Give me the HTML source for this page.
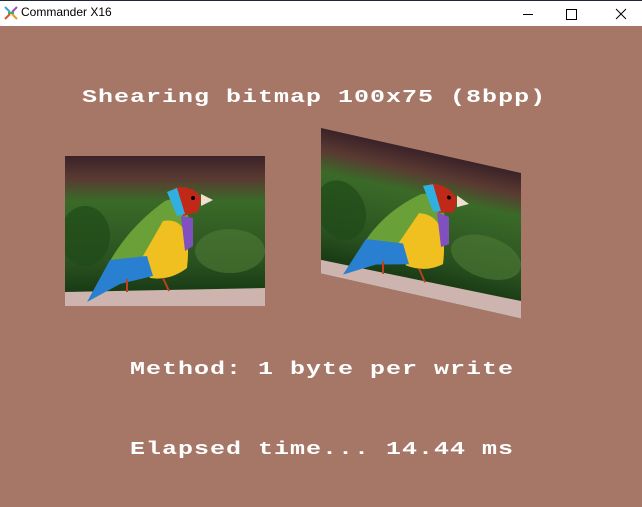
<!DOCTYPE html>
<html><head><style>
html,body{margin:0;padding:0;width:642px;height:507px;overflow:hidden;background:#a67767;font-family:"Liberation Sans",sans-serif}
#tb{position:absolute;left:0;top:0;width:642px;height:26px;background:#fff;border-top:1px solid #1f2a36;box-sizing:border-box}
#tb .t{position:absolute;left:21px;top:4px;font-size:12px;color:#000}
.txt{position:absolute;font-family:"Liberation Mono",monospace;font-weight:bold;color:#fff;font-size:25px;letter-spacing:1px;white-space:pre;transform:scaleY(0.72);transform-origin:left top}
</style></head><body>
<div id="tb">
<svg style="position:absolute;left:4px;top:5px" width="14" height="14" viewBox="0 0 14 14"><path d="M1 1 L6 6" stroke="#3aa0e0" stroke-width="2"/><path d="M13 1 L8 6" stroke="#9a50c0" stroke-width="2"/><path d="M1 13 L6 8" stroke="#e05030" stroke-width="2"/><path d="M13 13 L8 8" stroke="#e0a020" stroke-width="2"/><path d="M4 7 L10 7" stroke="#40b050" stroke-width="2"/></svg>
<span class="t">Commander X16</span>
<svg style="position:absolute;left:520px;top:6px" width="110" height="14"><path d="M3 7.5 H13" stroke="#000"/><rect x="46.5" y="2.5" width="10" height="10" fill="none" stroke="#000"/><path d="M96 2 L106 12 M106 2 L96 12" stroke="#000"/></svg>
</div>
<svg width="0" height="0" style="position:absolute">
<defs>
<linearGradient id="bg" x1="0" y1="0" x2="0" y2="1"><stop offset="0" stop-color="#3a2228"/><stop offset="0.15" stop-color="#5a3a32"/><stop offset="0.3" stop-color="#3a6a28"/><stop offset="0.7" stop-color="#2a5220"/><stop offset="1" stop-color="#123010"/></linearGradient>
<g id="bird">
<rect width="200" height="150" fill="url(#bg)"/>
<ellipse cx="165" cy="95" rx="35" ry="22" fill="#4f7a35" opacity="0.6"/>
<ellipse cx="20" cy="80" rx="25" ry="30" fill="#1f4a18" opacity="0.7"/>
<path d="M0 136 L200 132 L200 150 L0 150Z" fill="#cdb4ae"/>
<path d="M45 105 Q65 70 100 45 Q118 38 122 55 L128 80 L100 112 L55 110Z" fill="#6aa038"/>
<path d="M98 65 Q128 60 122 112 Q105 125 85 122 L78 100Z" fill="#f0c020"/>
<path d="M45 104 L82 100 L88 120 L55 128 L22 146Z" fill="#2a80d0"/>
<path d="M108 32 Q128 28 136 42 L133 56 L118 60Z" fill="#c02818"/>
<path d="M102 36 L112 32 L120 58 L112 60Z" fill="#30b0e0"/>
<path d="M116 60 L128 62 L128 90 L120 95Z" fill="#8050c0"/>
<path d="M136 38 L148 44 L136 50Z" fill="#f0e0d0"/>
<circle cx="128" cy="42" r="2" fill="#000"/>
<path d="M62 123 L62 136 M98 122 L104 135" stroke="#c04020" stroke-width="2"/>
</g>
</defs></svg>
<svg style="position:absolute;left:65px;top:156px" width="200" height="150"><use href="#bird"/></svg>
<svg style="position:absolute;left:321px;top:128px" width="200" height="196"><g transform="matrix(1 0.225 0 1 0 0)"><use href="#bird" transform="scale(1,0.97)"/></g></svg>
<div class="txt" style="left:82px;top:87px">Shearing bitmap 100x75 (8bpp)</div>
<div class="txt" style="left:130px;top:359px">Method: 1 byte per write</div>
<div class="txt" style="left:130px;top:439px">Elapsed time... 14.44 ms</div>
</body></html>
